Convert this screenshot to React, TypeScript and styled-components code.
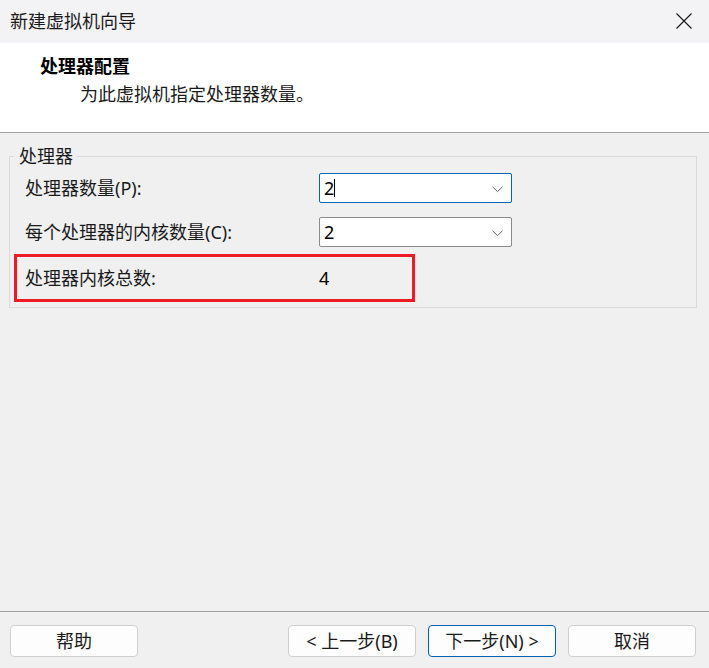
import React from "react";
import styled, { createGlobalStyle } from "styled-components";

const GlobalStyle = createGlobalStyle`
  html, body {
    margin: 0;
    padding: 0;
    background: #f0f0f0;
  }
  body {
    font-family: "Noto Sans", "Noto Sans CJK SC", sans-serif;
  }
  * { box-sizing: border-box; }
`;

const Window = styled.div`
  width: 709px;
  height: 668px;
  display: flex;
  flex-direction: column;
  background: #f0f0f0;
  color: #1a1a1a;
  font-size: 18px;
  overflow: hidden;
`;

const TitleBar = styled.div`
  flex: none;
  height: 43px;
  background: #f3f2f5;
  display: flex;
  align-items: center;
  justify-content: space-between;
  padding: 0 10px 2px 10px;
`;

const TitleText = styled.span`
  font-size: 18px;
  line-height: 24px;
  color: #1a1a1a;
`;

const CloseButton = styled.button`
  width: 30px;
  height: 30px;
  border: none;
  background: transparent;
  padding: 0;
  display: flex;
  align-items: center;
  justify-content: center;
  margin-top: 0;
`;

const Header = styled.div`
  flex: none;
  height: 90px;
  background: #ffffff;
  border-bottom: 1px solid #a0a0a0;
  padding: 8px 0 0 40px;
`;

const HeaderTitle = styled.div`
  font-family: "Noto Sans CJK SC", sans-serif;
  font-weight: 700;
  line-height: 28px;
  color: #000;
`;

const HeaderSubtitle = styled.div`
  font-family: "Noto Sans CJK SC", sans-serif;
  line-height: 28px;
  padding-left: 40px;
  color: #1a1a1a;
`;

const Body = styled.div`
  flex: 1;
  padding: 12px 12px 0 9px;
`;

const Group = styled.fieldset`
  margin: 0;
  border: 1px solid #dadada;
  padding: 0 0 5px 4px;
  min-inline-size: 0;
`;

const Legend = styled.legend`
  padding: 0 3px 0 5px;
  line-height: 22px;
  font-size: 18px;
  color: #1a1a1a;
`;

const Row = styled.div<{ $gap: number }>`
  display: flex;
  align-items: center;
  height: 30px;
  margin-top: ${(p) => p.$gap}px;
  padding-left: 11px;
`;

const Label = styled.span`
  width: 294px;
  flex: none;
  line-height: 24px;
`;

const Select = styled.div<{ $focused?: boolean }>`
  position: relative;
  width: 193px;
  height: 30px;
  background: #ffffff;
  border: 1px solid ${(p) => (p.$focused ? "#0067c0" : "#8a8a8a")};
  border-radius: 2px;
  display: flex;
  align-items: center;
  padding-left: 4px;
  color: #000;
`;

const SelectValue = styled.span`
  line-height: 24px;
`;

const Caret = styled.span`
  display: inline-block;
  width: 1px;
  height: 18px;
  background: #000;
  margin-left: 0;
`;

const Chevron = styled.svg`
  position: absolute;
  right: 8px;
  top: 12px;
`;

const SummaryRow = styled.div`
  display: flex;
  align-items: center;
  width: 401px;
  height: 48px;
  margin-top: 7px;
  border: 3px solid #ed1c24;
  padding-left: 8px;
`;

const Value = styled.span`
  line-height: 24px;
  color: #000;
`;

const Footer = styled.div`
  flex: none;
  height: 57px;
  border-top: 1px solid #a0a0a0;
  display: flex;
  gap: 12px;
  padding: 13px 13px 0 10px;
`;

const Button = styled.button<{ $primary?: boolean; $push?: boolean }>`
  width: 128px;
  height: 32px;
  border: 1px solid ${(p) => (p.$primary ? "#005fb8" : "#d0d0d0")};
  border-radius: 4px;
  background: #fdfdfd;
  font-family: inherit;
  font-size: 18px;
  line-height: 24px;
  color: #1a1a1a;
  padding: 0;
  margin-right: ${(p) => (p.$push ? "auto" : "0")};
`;

const ChevronIcon = () => (
  <Chevron width="11" height="7" viewBox="0 0 11 7">
    <path d="M0.5 0.8 L5.5 5.6 L10.5 0.8" fill="none" stroke="#606060" strokeWidth="1" />
  </Chevron>
);

export default function App() {
  return (
    <>
      <GlobalStyle />
      <Window>
        <TitleBar>
          <TitleText>新建虚拟机向导</TitleText>
          <CloseButton aria-label="关闭">
            <svg width="16" height="16" viewBox="0 0 16 16">
              <path d="M0.5 0.5 L15.5 15.5 M15.5 0.5 L0.5 15.5" stroke="#1a1a1a" strokeWidth="1.2" fill="none" />
            </svg>
          </CloseButton>
        </TitleBar>
        <Header>
          <HeaderTitle>处理器配置</HeaderTitle>
          <HeaderSubtitle>为此虚拟机指定处理器数量。</HeaderSubtitle>
        </Header>
        <Body>
          <Group>
            <Legend>处理器</Legend>
            <Row $gap={6}>
              <Label>处理器数量(P):</Label>
              <Select $focused>
                <SelectValue>2</SelectValue>
                <Caret />
                <ChevronIcon />
              </Select>
            </Row>
            <Row $gap={14}>
              <Label>每个处理器的内核数量(C):</Label>
              <Select>
                <SelectValue>2</SelectValue>
                <ChevronIcon />
              </Select>
            </Row>
            <SummaryRow>
              <Label>处理器内核总数:</Label>
              <Value>4</Value>
            </SummaryRow>
          </Group>
        </Body>
        <Footer>
          <Button $push>帮助</Button>
          <Button>&lt; 上一步(B)</Button>
          <Button $primary>下一步(N) &gt;</Button>
          <Button>取消</Button>
        </Footer>
      </Window>
    </>
  );
}
